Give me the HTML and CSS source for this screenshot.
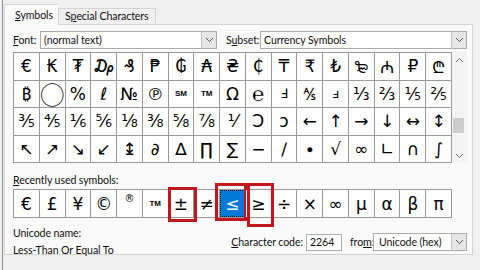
FILE: index.html
```html
<!DOCTYPE html>
<html lang="en">
<head>
    <meta charset="UTF-8">
    <title>Symbol</title>
    <link rel="stylesheet" href="styles.css">
</head>
<body>
<div class="dialog">
    <div class="tabs">
        <div class="tab active"><u>S</u>ymbols</div>
        <div class="tab">S<u>p</u>ecial Characters</div>
    </div>
    <div class="panel">
        <div class="font_row">
            <span class="lbl lbl_font"><u>F</u>ont:</span>
            <div class="select sel_font"><span>(normal text)</span><i class="drop"><svg width="9" height="6" viewBox="0 0 9 6"><path d="M1 1L4.5 4.5L8 1" fill="none" stroke="#555" stroke-width="1"/></svg></i></div>
            <span class="lbl lbl_subset">S<u>u</u>bset:</span>
            <div class="select sel_subset"><span>Currency Symbols</span><i class="drop"><svg width="9" height="6" viewBox="0 0 9 6"><path d="M1 1L4.5 4.5L8 1" fill="none" stroke="#555" stroke-width="1"/></svg></i></div>
        </div>
        <div class="grid_wrap">
            <div class="grid">
                <span>€</span><span>₭</span><span>₮</span><span>₯</span><span>₰</span><span>₱</span><span>₲</span><span>₳</span><span>₴</span><span>₵</span><span>₸</span><span>₹</span><span>₺</span><span>₻</span><span>₼</span><span>₽</span><span>₾</span>
                <span>₿</span><span class="circle">◯</span><span>%</span><span>ℓ</span><span>№</span><span>℗</span><span class="tiny">SM</span><span class="tiny">TM</span><span>Ω</span><span class="big">℮</span><span class="small">Ⅎ</span><span>⅍</span><span class="small">ⅎ</span><span>⅓</span><span>⅔</span><span>⅕</span><span>⅖</span>
                <span>⅗</span><span>⅘</span><span>⅙</span><span>⅚</span><span>⅛</span><span>⅜</span><span>⅝</span><span>⅞</span><span>⅟</span><span>Ↄ</span><span>ↄ</span><span>←</span><span>↑</span><span>→</span><span>↓</span><span>↔</span><span>↕</span>
                <span>↖</span><span>↗</span><span>↘</span><span>↙</span><span>↨</span><span>∂</span><span>∆</span><span>∏</span><span>∑</span><span>−</span><span>∕</span><span>∙</span><span>√</span><span>∞</span><span>∟</span><span>∩</span><span>∫</span>
            </div>
            <div class="scrollbar">
                <i class="arrow"><svg width="9" height="6" viewBox="0 0 9 6"><path d="M1 5L4.5 1.5L8 5" fill="none" stroke="#666" stroke-width="1"/></svg></i>
                <div class="track"><div class="thumb"></div></div>
                <i class="arrow"><svg width="9" height="6" viewBox="0 0 9 6"><path d="M1 1L4.5 4.5L8 1" fill="none" stroke="#666" stroke-width="1"/></svg></i>
            </div>
        </div>
        <div class="recent_label"><u>R</u>ecently used symbols:</div>
        <div class="recent">
            <span>€</span><span>£</span><span>¥</span><span>©</span><span class="reg">®</span><span class="tiny">TM</span><span class="marked m1">±<b class="mark"></b></span><span>≠</span><span class="marked m2 selected">≤<b class="mark"></b></span><span class="marked m3">≥<b class="mark"></b></span><span>÷</span><span>×</span><span>∞</span><span>µ</span><span>α</span><span>β</span><span>π</span>
        </div>
        <div class="info">
            <div class="info_left">
                <p>Unicode name:</p>
                <p>Less-Than Or Equal To</p>
            </div>
            <div class="info_right">
                <span class="lbl lbl_code"><u>C</u>haracter code:</span>
                <div class="input">2264</div>
                <span class="lbl lbl_from">fro<u>m</u>:</span>
                <div class="select sel_from"><span>Unicode (hex)</span><i class="drop"><svg width="9" height="6" viewBox="0 0 9 6"><path d="M1 1L4.5 4.5L8 1" fill="none" stroke="#555" stroke-width="1"/></svg></i></div>
            </div>
        </div>
    </div>
</div>
</body>
</html>
```

FILE: styles.css
```css
*{margin: 0;padding: 0;box-sizing: border-box}
body{
    width: 480px;
    height: 270px;
    overflow: hidden;
    background: #f0f0f0;
    font-family: Lato, "Noto Sans", sans-serif;
    font-size: 10.6px;
    letter-spacing: -0.1px;
    color: #111;
}
u{text-decoration: underline;text-underline-offset: 1px}
.lbl{white-space: nowrap}
.dialog{
    margin-left: 2px;
    border-left: 1px solid #8e8e8e;
    padding: 4px 0 0 1px;
    height: 270px;
}
.tabs{
    display: flex;
    align-items: flex-end;
    height: 20px;
}
    .tab{
        height: 16px;
        line-height: 14px;
        padding: 0 6px 0 6px;
        border: 1px solid #d5d5d5;
        border-bottom: none;
        background: #f0f0f0;
        white-space: nowrap;
    }
    .tab.active{
        height: 21px;
        line-height: 21px;
        width: 54px;
        padding: 0 0 0 10px;
        background: #fafafa;
        border-right: none;
        position: relative;
        z-index: 1;
        margin-bottom: -1px;
    }
.panel{
    width: 469px;
    height: 231px;
    background: #fafafa;
    border: 1px solid #d5d5d5;
    padding: 6px 5px 0 8px;
}
.font_row{
    display: flex;
    align-items: center;
    height: 18px;
}
    .lbl_font{width: 27px}
    .lbl_subset{width: 34px;margin-left: 9px}
.select{
    display: flex;
    align-items: center;
    height: 18px;
    background: #fff;
    border: 1px solid #adadad;
    padding-left: 3px;
}
    .select span{flex: 1;white-space: nowrap}
    .drop{
        width: 15px;
        height: 16px;
        display: flex;
        align-items: center;
        justify-content: center;
        background: #e6e6e6;
        border-left: 1px solid #c4c4c4;
    }
    .sel_font{width: 177px}
    .sel_subset{width: 207px}
    .sel_from{width: 94px;padding-left: 5px}
.grid_wrap{
    display: flex;
    margin-top: 3px;
}
.grid, .recent{
    width: 439px;
    display: grid;
    grid-template-columns: repeat(17, 1fr);
    gap: 1px;
    padding: 1px;
    background: #9a9a9a;
    font-family: "DejaVu Sans", "Noto Sans", sans-serif;
    font-size: 17px;
    letter-spacing: 0;
    color: #000;
}
.grid{grid-auto-rows: 26.5px}
.recent{grid-auto-rows: 27px;margin-top: 2px}
    .grid span, .recent span{
        background: #fff;
        display: flex;
        align-items: center;
        justify-content: center;
    }
    .circle{font-family: "Noto Sans CJK SC", sans-serif;font-size: 24px}
    .big{font-size: 20px;font-family: "Noto Sans", "DejaVu Sans", sans-serif}
    .small{font-size: 13px}
    .tiny{font-size: 8px;font-weight: bold;font-family: "Liberation Sans", sans-serif}
    .recent .reg{font-size: 10px;align-items: flex-start;padding-top: 3px}
.scrollbar{
    width: 15px;
    display: flex;
    flex-direction: column;
    background: #f4f4f4;
}
    .arrow{
        height: 15px;
        display: flex;
        align-items: center;
        justify-content: center;
    }
    .track{flex: 1;padding: 51px 3px 0 1px}
    .thumb{height: 15px;background: #cdcdcd}
.recent_label{
    margin-top: 10px;
    line-height: 14px;
}
.marked{position: relative}
    .mark{
        position: absolute;
        border: 3px solid #c1161d;
    }
    .m1 .mark{top: -3px;left: -1px;right: -4px;bottom: -5px}
    .m2 .mark{top: -7px;left: -5px;right: -2px;bottom: -4px}
    .m3 .mark{top: -7px;left: 1px;right: -3px;bottom: -10px}
.recent .selected{
    background: #0078d7;
    color: #fff;
    outline: 1px dotted #111;
    outline-offset: -1px;
}
.info{
    display: flex;
    padding-top: 7px;
}
    .info_left{line-height: 17px}
    .info_right{
        display: flex;
        align-items: center;
        margin: 8px 0 0 auto;
        height: 18px;
    }
    .lbl_code{margin-right: 3px}
    .input{
        width: 36px;
        height: 17px;
        background: #fff;
        border: 1px solid #adadad;
        padding-left: 3px;
        line-height: 15px;
    }
    .lbl_from{width: 23px;margin-left: 8px}
```
